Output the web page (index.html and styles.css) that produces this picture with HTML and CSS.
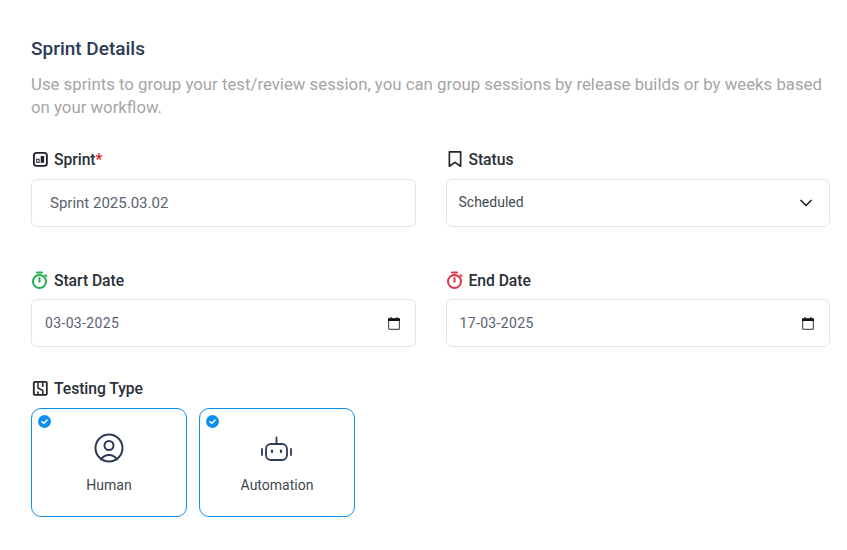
FILE: index.html
```html
<!DOCTYPE html>
<html lang="en">
<head>
<meta charset="utf-8">
<title>Sprint Details</title>
<link rel="stylesheet" href="styles.css">
</head>
<body>
<main class="page">
  <h2 class="title">Sprint Details</h2>
  <p class="desc">Use sprints to group your test/review session, you can group sessions by release builds or by weeks based on your workflow.</p>

  <div class="grid row-one">
    <div class="field">
      <label class="label">
        <svg class="ico" viewBox="0 0 18 18" fill="none" stroke="#212529" stroke-width="1.800"><rect x="2.900" y="2.900" width="13" height="13" rx="2.600"/><rect x="5.700" y="9.200" width="2.400" height="3.200" stroke-width="1"/><rect x="9.700" y="6" width="3.400" height="6.800" fill="#212529" stroke="none"/></svg>
        <span>Sprint<em class="req">*</em></span>
      </label>
      <div class="input name">Sprint 2025.03.02</div>
    </div>
    <div class="field">
      <label class="label">
        <svg class="ico" viewBox="0 0 16 16" fill="none" stroke="#212529" stroke-width="1.500" stroke-linejoin="round"><path d="M3 1.600h10v12.800l-5-3.400-5 3.400z"/></svg>
        <span>Status</span>
      </label>
      <div class="input select"><span>Scheduled</span>
        <svg class="chev" viewBox="0 0 12 12" fill="none" stroke="#212529" stroke-width="1.700" stroke-linecap="round" stroke-linejoin="round"><path d="M1 3.500 6 8.500l5-5"/></svg>
      </div>
    </div>
  </div>

  <div class="grid row-two">
    <div class="field">
      <label class="label">
        <svg class="ico timer" viewBox="0 0 18 18" fill="none" stroke="#22ad4e" stroke-width="2" stroke-linecap="round"><circle cx="8.500" cy="10.500" r="6.500"/><path d="M6 1.400h5M8.500 7v3.800M14.500 4.200l.8.800"/></svg>
        <span>Start Date</span>
      </label>
      <div class="input date"><span>03-03-2025</span>
        <svg class="cal" viewBox="0 0 12 13"><path d="M3 0v1.500M9 0v1.500" stroke="#222" stroke-width="1.200"/><rect x=".6" y="1.500" width="10.800" height="10.900" rx="1" fill="none" stroke="#555" stroke-width="1.200"/><rect x="0" y="1.500" width="12" height="2.500" fill="#111"/></svg>
      </div>
    </div>
    <div class="field">
      <label class="label">
        <svg class="ico timer" viewBox="0 0 18 18" fill="none" stroke="#dc3545" stroke-width="2" stroke-linecap="round"><circle cx="8.500" cy="10.500" r="6.500"/><path d="M6 1.400h5M8.500 7v3.800M14.500 4.200l.8.800"/></svg>
        <span>End Date</span>
      </label>
      <div class="input date"><span>17-03-2025</span>
        <svg class="cal" viewBox="0 0 12 13"><path d="M3 0v1.500M9 0v1.500" stroke="#222" stroke-width="1.200"/><rect x=".6" y="1.500" width="10.800" height="10.900" rx="1" fill="none" stroke="#555" stroke-width="1.200"/><rect x="0" y="1.500" width="12" height="2.500" fill="#111"/></svg>
      </div>
    </div>
  </div>

  <div class="types">
    <label class="label tight">
      <svg class="ico" viewBox="0 0 18 18" fill="none" stroke="#212529"><rect x="2.800" y="2.800" width="13" height="13" rx="1" stroke-width="1.800"/><path d="M7 3.500v5.500l4.800 2.500v3.500M11.800 3.500v4.500M7 12.500v2.500" stroke-width="1.500"/></svg>
      <span>Testing Type</span>
    </label>
    <div class="cards">
      <div class="card">
        <span class="check"><svg viewBox="0 0 14 14"><circle cx="7" cy="7" r="7" fill="#0d8fef"/><path d="M4.200 7.200 6.200 9l3.600-3.600" fill="none" stroke="#fff" stroke-width="1.500" stroke-linecap="round" stroke-linejoin="round"/></svg></span>
        <svg class="type-ico" viewBox="0 0 30 30" fill="none" stroke="#2d3a55" stroke-width="2" stroke-linecap="round"><circle cx="15" cy="15" r="13.500"/><circle cx="15" cy="12.500" r="4.500"/><path d="M7 26.500c2-3 5-4.500 8-4.500s6 1.500 8 4.500"/></svg>
        <span class="card-name">Human</span>
      </div>
      <div class="card">
        <span class="check"><svg viewBox="0 0 14 14"><circle cx="7" cy="7" r="7" fill="#0d8fef"/><path d="M4.200 7.200 6.200 9l3.600-3.600" fill="none" stroke="#fff" stroke-width="1.500" stroke-linecap="round" stroke-linejoin="round"/></svg></span>
        <svg class="type-ico" viewBox="0 0 32 30" fill="none" stroke="#2d3a55" stroke-width="1.800" stroke-linecap="round"><rect x="5" y="11" width="21" height="16" rx="5"/><path d="M15.500 10.500V4.500M1 16v6M30 16v6"/><path d="M11 17.500v1.500M20 17.500v1.500" stroke-width="2.200"/></svg>
        <span class="card-name">Automation</span>
      </div>
    </div>
  </div>
</main>
</body>
</html>
```

FILE: styles.css
```css
* { box-sizing: border-box; }

html, body {
  margin: 0;
  background: #fff;
}

body {
  font-family: Roboto, "Liberation Sans", sans-serif;
  color: #212529;
}

.page {
  width: 847px;
  height: 550px;
  overflow: hidden;
  padding: 37px 17px 0 31px;
}

.title {
  margin: 0;
  font-size: 19px;
  line-height: 24px;
  font-weight: 500;
  color: #2d3a55;
}

.desc {
  margin: 12px 0 0;
  font-size: 16.8px;
  line-height: 23px;
  color: #a5a5a5;
}

.grid {
  display: grid;
  grid-template-columns: 1fr 1fr;
  column-gap: 30px;
}

.row-one { margin-top: 28px; }
.row-two { margin-top: 41px; }
.types { margin-top: 29px; }

.label {
  display: flex;
  align-items: center;
  gap: 5px;
  height: 24px;
  margin-bottom: 8px;
  font-size: 15.7px;
  font-weight: 500;
  letter-spacing: -.05px;
  color: #2b2f36;
}

.label.tight { margin-bottom: 8px; }

.row-two .label { margin-bottom: 7px; }

.ico {
  width: 18px;
  height: 18px;
  flex: none;
}

.req {
  font-style: normal;
  color: #e3141e;
}

.input {
  display: flex;
  align-items: center;
  height: 48px;
  background: #fff;
  border: 1px solid #dee6ef;
  border-radius: 6px;
  font-size: 14px;
  color: #5a6270;
}

.name {
  padding-left: 18px;
  font-size: 15px;
}

.select {
  justify-content: space-between;
  padding: 0 17px 0 12px;
  color: #454b54;
}

.select span { margin-top: -2px; }

.chev {
  width: 12px;
  height: 12px;
}

.date {
  justify-content: space-between;
  padding: 0 15px 0 13px;
  letter-spacing: .35px;
}

.cal {
  width: 12px;
  height: 13px;
}

.cards {
  display: flex;
  gap: 12px;
}

.card {
  position: relative;
  display: flex;
  flex-direction: column;
  align-items: center;
  width: 156px;
  height: 109px;
  padding-top: 24px;
  border: 1px solid #0d8fef;
  border-radius: 10px;
}

.check {
  position: absolute;
  top: 6px;
  left: 6px;
  width: 13px;
  height: 13px;
}

.check svg {
  display: block;
  width: 13px;
  height: 13px;
}

.type-ico {
  width: 32px;
  height: 30px;
}

.card-name {
  margin-top: 12px;
  font-size: 14px;
  line-height: 20px;
  color: #414750;
}
```
